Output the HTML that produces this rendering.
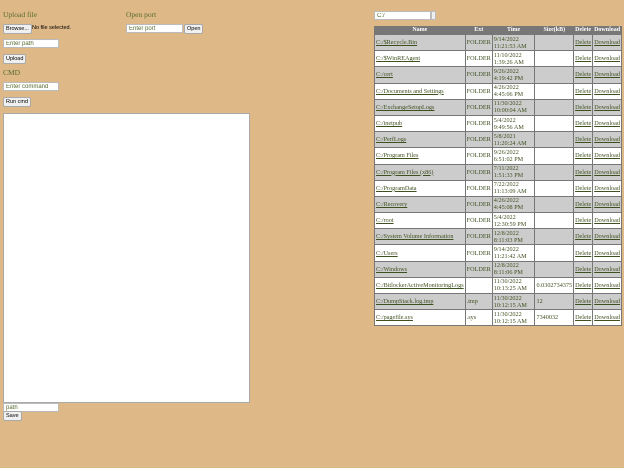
<!DOCTYPE html>
<html><head><style>
body{margin:0;width:624px;height:468px;background:#deb887;font-family:"Liberation Serif",serif;color:#556b2f;position:relative;overflow:hidden}
.a{position:absolute}
.h{font-size:7.5px}
input.t{position:absolute;height:7px;border:1px solid #bbb;background:#fff;font:6px "Liberation Sans",sans-serif;color:#556b2f;padding:0 2px;box-sizing:content-box}
.b{position:absolute;height:8px;border:1px solid #aaa;border-radius:2px;background:#f0f0f0;font:5.5px "Liberation Sans",sans-serif;color:#000;line-height:8px;padding:0 2px}
table{position:absolute;left:374px;top:26px;width:248px;border-collapse:separate;border-spacing:1px;background:#777;font-size:6.2px;line-height:7px}
th{background:#777;color:#fff;height:6px;padding:0;font-size:6px}
td{height:15.2px;padding:0 1px;color:#3f5020;white-space:normal}
tbody tr:nth-child(odd) td{background:#ccc}
tbody tr:nth-child(even) td{background:#fff}
td a{color:#3f5020;text-decoration:underline}
</style></head><body>
<div class="a h" style="left:3px;top:10px">Upload file</div>
<div class="b" style="left:3px;top:24px">Browse...</div>
<div class="a" style="left:32px;top:25px;font:5.5px 'Liberation Sans',sans-serif;color:#000">No file selected.</div>
<input class="t" style="left:3px;top:39px;width:50px" value="Enter path">
<div class="b" style="left:3px;top:54px">Upload</div>
<div class="a h" style="left:3px;top:68px">CMD</div>
<input class="t" style="left:3px;top:82px;width:50px" value="Enter command">
<div class="b" style="left:3px;top:97px">Run cmd</div>
<div class="a" style="left:3px;top:113px;width:245px;height:288px;background:#fff;border:1px solid #aaa"></div>
<input class="t" style="left:3px;top:403px;width:50px" value="path">
<div class="b" style="left:3px;top:411px">Save</div>
<div class="a h" style="left:126px;top:10px">Open port</div>
<input class="t" style="left:126px;top:24px;width:51px" value="Enter port">
<div class="b" style="left:184px;top:24px">Open</div>
<input class="t" style="left:374px;top:11px;width:51px" value="C:/">
<div class="a" style="left:431px;top:11px;width:3px;height:7px;background:#eee;border:1px solid #bbb"></div>
<table>
<thead><tr><th style="width:87px">Name</th><th style="width:24px">Ext</th><th style="width:47px">Time</th><th style="width:35px">Size(kB)</th><th style="width:16px">Delete</th><th>Download</th></tr></thead>
<tbody>
<tr><td><a>C:/$Recycle.Bin</a></td><td>FOLDER</td><td>9/14/2022 11:21:53 AM</td><td></td><td><a>Delete</a></td><td><a>Download</a></td></tr>
<tr><td><a>C:/$WinREAgent</a></td><td>FOLDER</td><td>11/10/2022 1:39:26 AM</td><td></td><td><a>Delete</a></td><td><a>Download</a></td></tr>
<tr><td><a>C:/cert</a></td><td>FOLDER</td><td>9/26/2022 4:19:42 PM</td><td></td><td><a>Delete</a></td><td><a>Download</a></td></tr>
<tr><td><a>C:/Documents and Settings</a></td><td>FOLDER</td><td>4/26/2022 4:45:06 PM</td><td></td><td><a>Delete</a></td><td><a>Download</a></td></tr>
<tr><td><a>C:/ExchangeSetupLogs</a></td><td>FOLDER</td><td>11/30/2022 10:00:04 AM</td><td></td><td><a>Delete</a></td><td><a>Download</a></td></tr>
<tr><td><a>C:/inetpub</a></td><td>FOLDER</td><td>5/4/2022 9:49:56 AM</td><td></td><td><a>Delete</a></td><td><a>Download</a></td></tr>
<tr><td><a>C:/PerfLogs</a></td><td>FOLDER</td><td>5/8/2021 11:20:24 AM</td><td></td><td><a>Delete</a></td><td><a>Download</a></td></tr>
<tr><td><a>C:/Program Files</a></td><td>FOLDER</td><td>9/26/2022 6:51:02 PM</td><td></td><td><a>Delete</a></td><td><a>Download</a></td></tr>
<tr><td><a>C:/Program Files (x86)</a></td><td>FOLDER</td><td>7/11/2022 1:51:33 PM</td><td></td><td><a>Delete</a></td><td><a>Download</a></td></tr>
<tr><td><a>C:/ProgramData</a></td><td>FOLDER</td><td>7/22/2022 11:13:09 AM</td><td></td><td><a>Delete</a></td><td><a>Download</a></td></tr>
<tr><td><a>C:/Recovery</a></td><td>FOLDER</td><td>4/26/2022 4:45:08 PM</td><td></td><td><a>Delete</a></td><td><a>Download</a></td></tr>
<tr><td><a>C:/root</a></td><td>FOLDER</td><td>5/4/2022 12:30:59 PM</td><td></td><td><a>Delete</a></td><td><a>Download</a></td></tr>
<tr><td><a>C:/System Volume Information</a></td><td>FOLDER</td><td>12/8/2022 8:11:03 PM</td><td></td><td><a>Delete</a></td><td><a>Download</a></td></tr>
<tr><td><a>C:/Users</a></td><td>FOLDER</td><td>9/14/2022 11:21:42 AM</td><td></td><td><a>Delete</a></td><td><a>Download</a></td></tr>
<tr><td><a>C:/Windows</a></td><td>FOLDER</td><td>12/8/2022 8:11:06 PM</td><td></td><td><a>Delete</a></td><td><a>Download</a></td></tr>
<tr><td><a>C:/BitlockerActiveMonitoringLogs</a></td><td></td><td>11/30/2022 10:13:25 AM</td><td>0.0302734375</td><td><a>Delete</a></td><td><a>Download</a></td></tr>
<tr><td><a>C:/DumpStack.log.tmp</a></td><td>.tmp</td><td>11/30/2022 10:12:15 AM</td><td>12</td><td><a>Delete</a></td><td><a>Download</a></td></tr>
<tr><td><a>C:/pagefile.sys</a></td><td>.sys</td><td>11/30/2022 10:12:15 AM</td><td>7340032</td><td><a>Delete</a></td><td><a>Download</a></td></tr>
</tbody>
</table>
</body></html>
